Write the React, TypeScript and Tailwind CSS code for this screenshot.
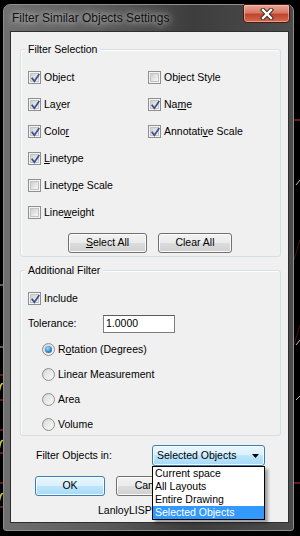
import React from 'react'

function CheckMark() {
  return (
    <svg className="absolute left-0 top-0" width="13" height="13" viewBox="0 0 13 13">
      <path d="M3.2 6.4 L5.4 9.2 L9.8 2.8" fill="none" stroke="#3d5190" strokeWidth="1.7" strokeLinecap="square" strokeLinejoin="miter" />
    </svg>
  )
}

function Check({ on, children }: { on?: boolean; children: React.ReactNode }) {
  return (
    <div className="flex h-[13px] items-center gap-[3px]">
      <span className="relative flex h-[13px] w-[13px] shrink-0 items-center justify-center border border-[#8e8f8f] bg-[#f4f4f4]">
        <span className="h-[9px] w-[9px] border border-[#c3c3c3] bg-[linear-gradient(135deg,#cfcfcf,#f7f7f7)]" />
        {on && <CheckMark />}
      </span>
      <span className="leading-[13px]">{children}</span>
    </div>
  )
}

function Radio({ on, children }: { on?: boolean; children: React.ReactNode }) {
  return (
    <div className="flex h-[13px] items-center gap-[3px]">
      <span className="flex h-[13px] w-[13px] shrink-0 items-center justify-center rounded-full border border-[#8e8f8f] bg-[linear-gradient(135deg,#d2d2d2,#fbfbfb)]">
        {on ? (
          <span className="h-[7px] w-[7px] rounded-full bg-[radial-gradient(circle_at_40%_35%,#a6e0fb_0%,#2f86c8_55%,#174f8a_100%)]" />
        ) : (
          <span className="h-[9px] w-[9px] rounded-full bg-[linear-gradient(135deg,#dcdcdc,#f8f8f8)]" />
        )}
      </span>
      <span className="leading-[13px]">{children}</span>
    </div>
  )
}

function Group({ label, className, children }: { label: string; className: string; children: React.ReactNode }) {
  return (
    <div className={'relative ml-[9px] w-[261px] rounded-[3px] border border-[#d5dfe5] shadow-[inset_1px_1px_0_#ffffff] ' + className}>
      <span className="absolute left-[4px] top-[-7px] bg-[#f0f0f0] px-[3px] leading-[13px]">{label}</span>
      {children}
    </div>
  )
}

const btn =
  'flex h-[20px] items-center justify-center rounded-[3px] border border-[#707070] bg-[linear-gradient(#f2f2f2_0%,#ebebeb_50%,#dddddd_50%,#cfcfcf_100%)] shadow-[inset_0_0_0_1px_#fbfbfb]'

const blueBtn =
  'flex items-center rounded-[3px] border border-[#3c7fb1] bg-[linear-gradient(#eaf6fd_0%,#d9f0fc_50%,#bee6fd_50%,#a7d9f5_100%)] shadow-[inset_0_0_0_1px_#f4fbff]'

function CadBackdrop() {
  return (
    <svg className="absolute inset-0" width="300" height="536" viewBox="0 0 300 536">
      <g stroke="#c0392b" strokeWidth="1">
        <path d="M0 375 H3 M0 400 H3 M0 430 H3 M0 453 H3 M0 483 H3 M0 507 H3" />
        <path d="M294 483 H300 M294 120 H300" />
      </g>
      <g stroke="#4a1010" strokeWidth="1" fill="none">
        <path d="M294 345 L300 325 M294 260 L300 240" />
      </g>
      <g stroke="#c9c23a" strokeWidth="1.5" fill="none">
        <path d="M-1 393 Q1 380 4 385 M-1 450 Q1 437 4 442 M-1 503 Q1 490 4 495" />
      </g>
      <g stroke="#bdbdbd" strokeWidth="1" fill="none">
        <path d="M0 347 H3 M0 285 H3 M296 345 L300 340 M296 400 L300 396 M296 185 L300 180" />
      </g>
    </svg>
  )
}

export default function App() {
  return (
    <div className="relative h-[536px] w-[300px] overflow-hidden bg-black font-['Liberation_Sans',Arial,sans-serif] text-[10.5px] text-black">
      <CadBackdrop />

      <div className="absolute left-[3px] top-[4px] flex h-[527px] w-[291px] flex-col rounded-t-[7px] rounded-b-[3px] border border-[#8d8d8d] bg-[linear-gradient(90deg,#6f6f6f_0%,#5a5a5a_35%,#3d3d3d_65%,#4d4d4d_100%)] pb-[7px] pl-[6px] pr-[4px]">
        {/* title bar */}
        <div className="relative flex h-[26px] shrink-0 items-center pl-[2px]">
          <span className="text-[12px] text-[#111] [text-shadow:0_0_6px_rgba(230,230,230,0.9),0_0_12px_rgba(220,220,220,0.7)]">
            Filter Similar Objects Settings
          </span>
          <div className="absolute right-[-1px] top-[-1px] flex h-[19px] w-[47px] items-center justify-center rounded-b-[4px] rounded-t-[2px] border border-[#4a1a12] bg-[linear-gradient(#e9a797_0%,#d77a66_45%,#c0452d_55%,#d06a4f_100%)] shadow-[inset_0_0_0_1px_rgba(255,210,200,0.5)]">
            <svg width="14" height="12" viewBox="0 0 14 12">
              <path d="M3 2 L11 10 M11 2 L3 10" stroke="#3b2a28" strokeWidth="4.4" strokeLinecap="square" />
              <path d="M3 2 L11 10 M11 2 L3 10" stroke="#ffffff" strokeWidth="2.4" strokeLinecap="square" />
            </svg>
          </div>
        </div>

        {/* client area */}
        <div className="flex flex-1 flex-col border border-[#2e2e2e] bg-[#f0f0f0]">
          <Group label="Filter Selection" className="mt-[17px] h-[208px]">
            <div className="flex pl-[7px] pt-[21px]">
              <div className="flex w-[120px] flex-col gap-[14px]">
                <Check on>Ob<u>j</u>ect</Check>
                <Check on>La<u>y</u>er</Check>
                <Check on>Colo<u>r</u></Check>
                <Check on><u>L</u>inetype</Check>
                <Check>Linety<u>p</u>e Scale</Check>
                <Check>Line<u>w</u>eight</Check>
              </div>
              <div className="flex flex-col gap-[14px]">
                <Check>Object Style</Check>
                <Check on>Na<u>m</u>e</Check>
                <Check on>Annotati<u>v</u>e Scale</Check>
              </div>
            </div>
            <div className="ml-[47px] mt-[14px] flex gap-[11px]">
              <button className={btn + ' w-[79px]'}><u>S</u>elect All</button>
              <button className={btn + ' w-[74px]'}>Clear All</button>
            </div>
          </Group>

          <Group label="Additional Filter" className="mt-[13px] h-[166px]">
            <div className="flex flex-col pl-[7px] pt-[21px]">
              <Check on>Include</Check>
              <div className="mt-[10px] flex h-[18px] items-center">
                <span className="w-[75px]">Tolerance:</span>
                <div className="flex h-[18px] w-[72px] items-center border border-[#7f7f7f] border-t-[#5c5c5c] bg-white pl-[2px]">1.0000</div>
              </div>
              <div className="ml-[14px] mt-[10px] flex flex-col gap-[12px]">
                <Radio on>R<u>o</u>tation (Degrees)</Radio>
                <Radio>Linear Measurement</Radio>
                <Radio>Area</Radio>
                <Radio>Volume</Radio>
              </div>
            </div>
          </Group>

          <div className="mt-[9px] flex h-[21px] items-center">
            <span className="ml-[25px] w-[116px]">Filter Objects in:</span>
            <div className="relative">
              <div className={blueBtn + ' h-[21px] w-[113px] justify-between pl-[4px] pr-[5px]'}>
                <span>Selected Objects</span>
                <svg width="7" height="4" viewBox="0 0 7 4">
                  <path d="M0 0 H7 L3.5 4 Z" fill="#000" />
                </svg>
              </div>
              <div className="absolute left-0 top-full z-10 flex w-[113px] flex-col border border-black bg-white shadow-[3px_3px_3px_rgba(0,0,0,0.35)]">
                <div className="h-[13px] pl-[2px] leading-[13px]">Current space</div>
                <div className="h-[13px] pl-[2px] leading-[13px]">All Layouts</div>
                <div className="h-[13px] pl-[2px] leading-[13px]">Entire Drawing</div>
                <div className="h-[13px] bg-[#3399ff] pl-[2px] leading-[13px] text-white">Selected Objects</div>
              </div>
            </div>
          </div>

          <div className="ml-[24px] mt-[10px] flex gap-[11px]">
            <button className={blueBtn + ' h-[20px] w-[70px] justify-center'}>OK</button>
            <button className={btn + ' w-[70px]'}>Cancel</button>
          </div>

          <div className="ml-[87px] mt-[8px] leading-[13px]">LanloyLISP</div>
        </div>
      </div>
    </div>
  )
}
